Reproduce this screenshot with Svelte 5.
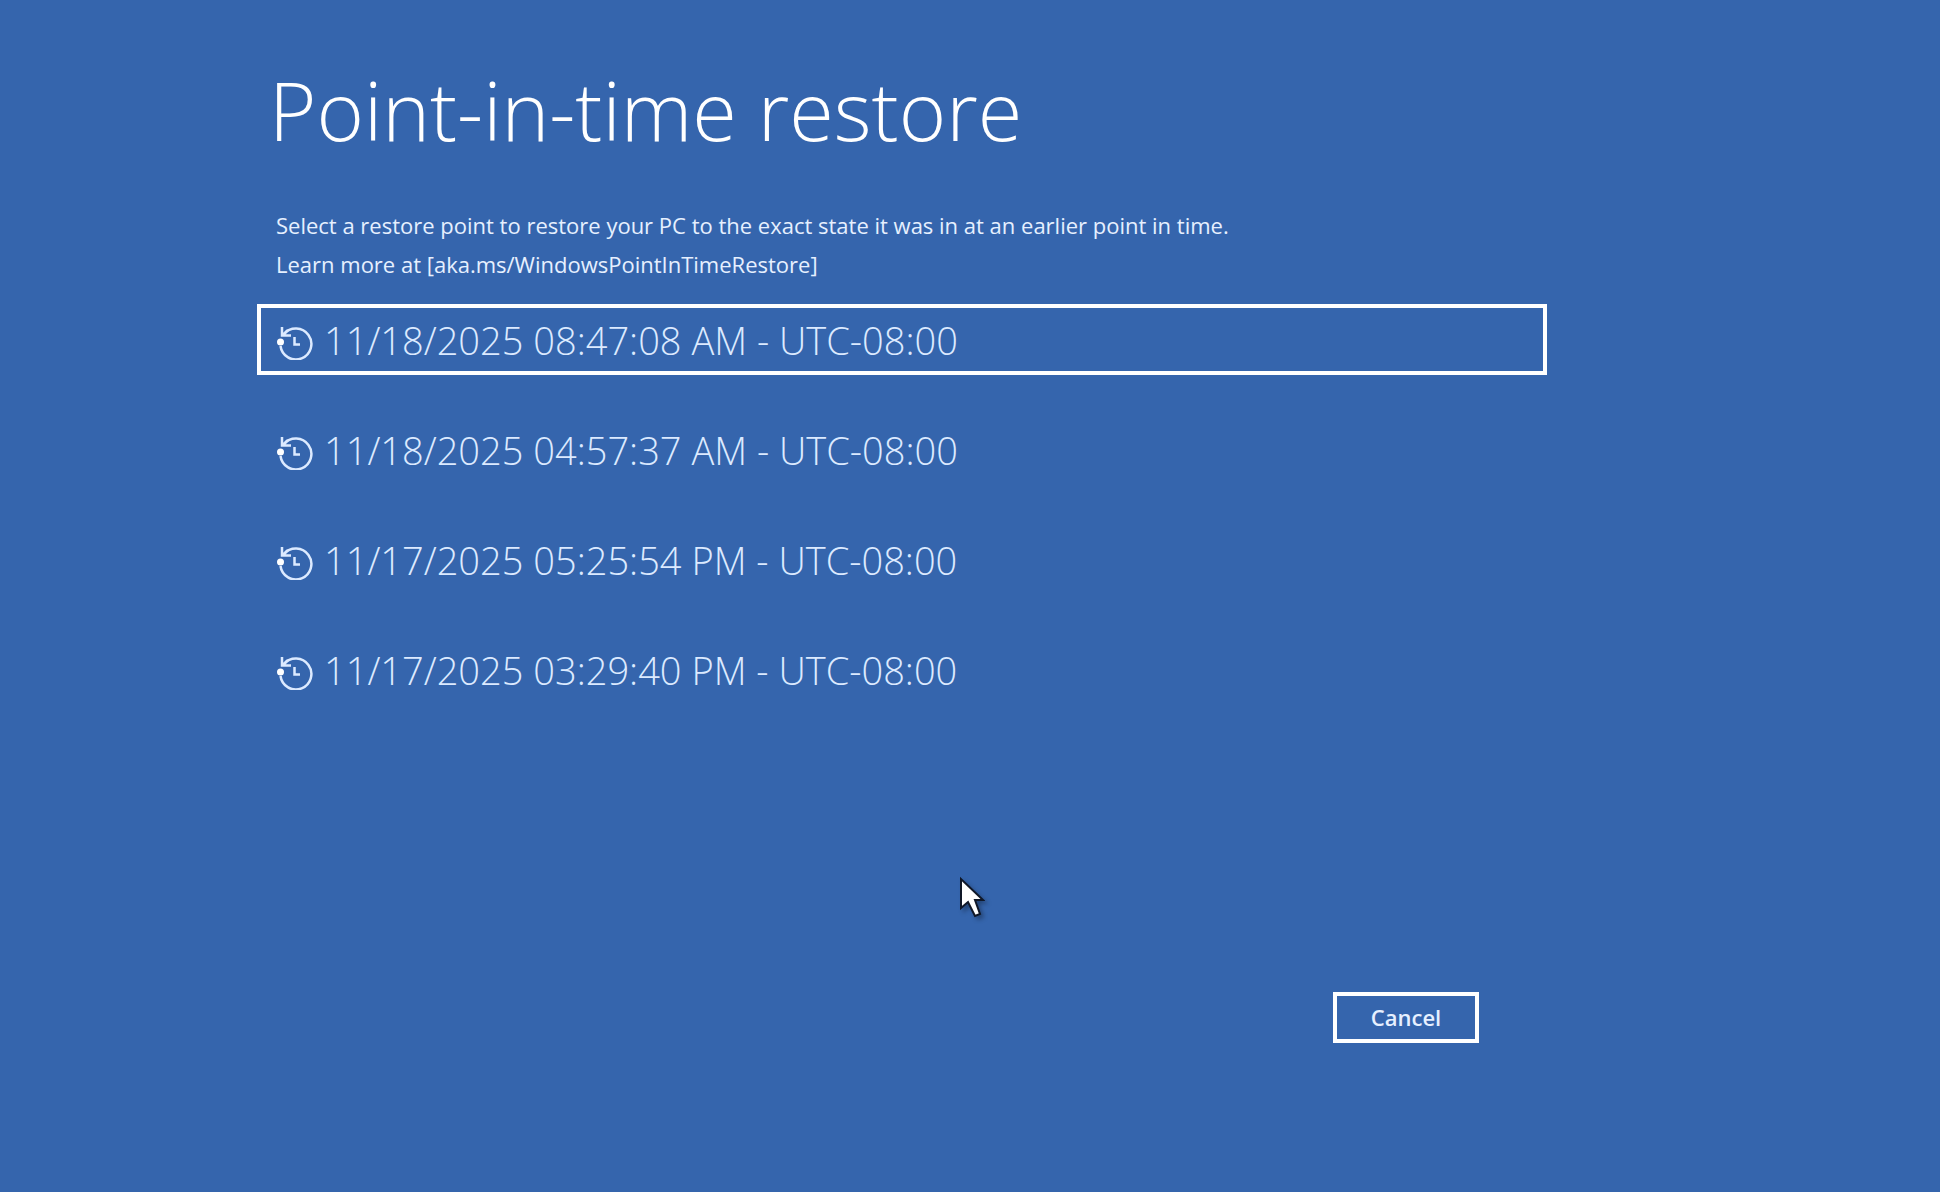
<script>
  const points = [
    '11/18/2025 08:47:08 AM - UTC-08:00',
    '11/18/2025 04:57:37 AM - UTC-08:00',
    '11/17/2025 05:25:54 PM - UTC-08:00',
    '11/17/2025 03:29:40 PM - UTC-08:00'
  ];
  let selected = $state(0);
</script>

<div class="screen">
  <main>
    <h1>Point-in-time restore</h1>
    <p>
      Select a restore point to restore your PC to the exact state it was in at an earlier point in time.<br />
      Learn more at <a href="https://aka.ms/WindowsPointInTimeRestore">[aka.ms/WindowsPointInTimeRestore]</a>
    </p>
    <ul>
      {#each points as point, i}
        <li>
          <button class="point" class:selected={selected === i} onclick={() => (selected = i)}>
            <svg class="history" viewBox="0 0 40 40" aria-hidden="true">
              <path d="M8 14A15.5 15.5 0 1 1 4.5 26" />
              <path d="M6 7v8.500h9M7 15L12 10" />
              <path d="M18.500 17v7.500h5.500" />
              <circle cx="4.500" cy="22" r="3.500" />
            </svg>
            <span>{point}</span>
          </button>
        </li>
      {/each}
    </ul>
    <div class="actions">
      <button class="cancel">Cancel</button>
    </div>
  </main>
  <svg class="pointer" viewBox="0 0 26 42" aria-hidden="true">
    <path d="M2 3V32L9 26L16 40L21 38L16 24H24Z" />
  </svg>
</div>

<style>
  :global(body) {
    margin: 0;
    background: #3565ad;
  }
  .screen {
    position: relative;
    box-sizing: border-box;
    min-height: 100vh;
    display: grid;
    grid-template-columns: 257fr 1290fr 393fr;
    padding: 52px 0;
    color: #fff;
    font-family: 'Segoe UI', 'Open Sans', sans-serif;
  }
  main {
    grid-column: 2;
    min-width: 0;
  }
  h1 {
    margin: 0 0 38px 12px;
    font-size: 81px;
    line-height: 116px;
    font-weight: 300;
    white-space: nowrap;
  }
  p {
    margin: 0 0 20px 19px;
    font-size: 22px;
    line-height: 39px;
    color: #e6f0ff;
  }
  a {
    color: inherit;
    text-decoration: none;
  }
  ul {
    list-style: none;
    margin: 0;
    padding: 0;
    display: grid;
    gap: 39px;
  }
  button {
    font-family: inherit;
    background: none;
    color: inherit;
    border: 4px solid transparent;
    border-radius: 0;
    outline: none;
  }
  .point {
    box-sizing: border-box;
    width: 100%;
    height: 71px;
    display: flex;
    align-items: center;
    gap: 8px;
    padding: 0 15px;
    font-size: 38px;
    line-height: 56px;
    font-weight: 300;
    color: #dceaff;
    white-space: nowrap;
  }
  .selected,
  .cancel {
    border-color: #fff;
  }
  .history {
    flex: none;
    width: 40px;
    height: 40px;
    fill: none;
    stroke: #dceaff;
    stroke-width: 2.5;
  }
  .history circle {
    fill: #fff;
    stroke: none;
  }
  .actions {
    display: flex;
    justify-content: flex-end;
    padding: 287px 68px 0 0;
  }
  .cancel {
    width: 146px;
    height: 51px;
    padding: 0 0 2px;
    font-size: 22px;
    line-height: 30px;
    font-weight: 600;
    color: #e6f0ff;
  }
  .pointer {
    position: absolute;
    left: 959px;
    top: 876px;
    width: 26px;
    height: 42px;
    fill: #fff;
    stroke: #101828;
    stroke-width: 2;
    filter: drop-shadow(3px 3px 2px rgb(0 0 0 / 30%));
  }
</style>
